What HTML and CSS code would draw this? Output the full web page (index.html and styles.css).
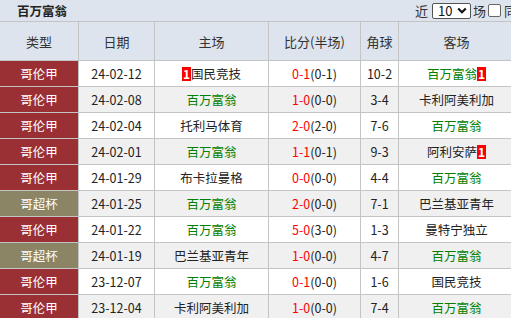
FILE: index.html
```html
<!DOCTYPE html>
<html lang="zh">
<head>
<meta charset="utf-8">
<link rel="stylesheet" href="styles.css">
</head>
<body>
<div class="bar">
  <span class="title">百万富翁</span>
  <div class="tools">
    <span class="t-near">近</span>
    <span class="sel">10<svg width="10" height="7" viewBox="0 0 10 7"><path d="M1.2 1.5 L5 5.2 L8.8 1.5" fill="none" stroke="#111" stroke-width="2.2"/></svg></span>
    <span class="t-field">场</span>
    <span class="chk"></span>
    <span>同</span>
  </div>
</div>
<table class="tbl">
  <colgroup>
    <col class="c1"><col class="c2"><col class="c3"><col class="c4"><col class="c5"><col class="c6">
  </colgroup>
  <thead>
    <tr><th>类型</th><th>日期</th><th>主场</th><th>比分(半场)</th><th>角球</th><th>客场</th></tr>
  </thead>
  <tbody>
    <tr><td class="lg">哥伦甲</td><td>24-02-12</td><td><span class="badge">1</span>国民竞技</td><td><span class="ft">0-1</span>(0-1)</td><td>10-2</td><td class="g">百万富翁<span class="badge">1</span></td></tr>
    <tr class="alt"><td class="lg">哥伦甲</td><td>24-02-08</td><td class="g">百万富翁</td><td><span class="ft">1-0</span>(0-0)</td><td>3-4</td><td>卡利阿美利加</td></tr>
    <tr><td class="lg">哥伦甲</td><td>24-02-04</td><td>托利马体育</td><td><span class="ft">2-0</span>(2-0)</td><td>7-6</td><td class="g">百万富翁</td></tr>
    <tr class="alt"><td class="lg">哥伦甲</td><td>24-02-01</td><td class="g">百万富翁</td><td><span class="ft">1-1</span>(0-1)</td><td>9-3</td><td>阿利安萨<span class="badge">1</span></td></tr>
    <tr><td class="lg">哥伦甲</td><td>24-01-29</td><td>布卡拉曼格</td><td><span class="ft">0-0</span>(0-0)</td><td>4-4</td><td class="g">百万富翁</td></tr>
    <tr class="alt"><td class="cup">哥超杯</td><td>24-01-25</td><td class="g">百万富翁</td><td><span class="ft">2-0</span>(0-0)</td><td>7-1</td><td>巴兰基亚青年</td></tr>
    <tr><td class="lg">哥伦甲</td><td>24-01-22</td><td class="g">百万富翁</td><td><span class="ft">5-0</span>(3-0)</td><td>1-3</td><td>曼特宁独立</td></tr>
    <tr class="alt"><td class="cup">哥超杯</td><td>24-01-19</td><td>巴兰基亚青年</td><td><span class="ft">1-0</span>(0-0)</td><td>4-7</td><td class="g">百万富翁</td></tr>
    <tr><td class="lg">哥伦甲</td><td>23-12-07</td><td class="g">百万富翁</td><td><span class="ft">0-1</span>(0-0)</td><td>1-6</td><td>国民竞技</td></tr>
    <tr class="alt"><td class="lg">哥伦甲</td><td>23-12-04</td><td>卡利阿美利加</td><td><span class="ft">1-0</span>(0-0)</td><td>7-4</td><td class="g">百万富翁</td></tr>
  </tbody>
</table>
</body>
</html>
```

FILE: styles.css
```css
html, body {
  margin: 0;
  padding: 0;
  background: #dde4ed;
  overflow: hidden;
}
body {
  width: 511px;
  font-family: "Noto Sans CJK SC", "Noto Sans", sans-serif;
  font-size: 12px;
  color: #222;
}
.bar {
  height: 21px;
  display: flex;
  align-items: center;
  justify-content: space-between;
  background: #dde4ed;
  overflow: hidden;
}
.title {
  font-weight: bold;
  font-size: 12.5px;
  margin-left: 17px;
  color: #222;
}
.tools {
  display: flex;
  align-items: center;
  gap: 0;
  margin-right: -6px;
  font-size: 13px;
  color: #333;
  flex-shrink: 0;
}
.tools > * { flex-shrink: 0; }
.t-near { margin-right: 4px; }
.t-field { margin-left: 2px; margin-right: 2px; }
.chk { margin-right: 3px; }
.sel {
  display: inline-flex;
  align-items: center;
  justify-content: space-between;
  box-sizing: border-box;
  height: 16px;
  width: 39px;
  padding: 0 3px 0 5px;
  border: 1px solid #555;
  background: #fff;
  font-size: 13px;
  line-height: 14px;
  color: #111;
  border-radius: 2px;
}
.chk {
  display: inline-block;
  box-sizing: border-box;
  width: 13px;
  height: 13px;
  border: 1px solid #666;
  border-radius: 2px;
  background: #fff;
}
.tbl {
  border-collapse: collapse;
  table-layout: fixed;
  width: 515px;
  margin-left: -1px;
}
.c1 { width: 79px; }
.c2 { width: 76px; }
.c3 { width: 114px; }
.c4 { width: 92px; }
.c5 { width: 38px; }
.c6 { width: 116px; }
.tbl th, .tbl td {
  border: 1px solid #c4c4c4;
  padding: 0;
  text-align: center;
  white-space: nowrap;
  overflow: hidden;
}
.tbl thead tr {
  height: 39px;
}
.tbl th {
  font-weight: normal;
  font-size: 13px;
  color: #333;
  background: #dde4ed;
}
.tbl tbody tr {
  height: 26px;
}
.tbl td {
  font-size: 12.5px;
  line-height: 16px;
  color: #222;
  background: #fff;
}
.tbl tr.alt td {
  background: #f0f0f0;
}
.tbl td.lg {
  background: #9b3034;
  color: #fff;
}
.tbl td.cup {
  background: #8b8566;
  color: #fff;
}
.tbl tr.alt td.lg { background: #9b3034; }
.tbl tr.alt td.cup { background: #8b8566; }
.g { color: #008000 !important; }
.ft { color: #ff0000; }
.badge {
  display: inline-block;
  background: #ff0000;
  color: #fff;
  font-weight: bold;
  font-size: 12px;
  line-height: 14px;
  padding: 0 1px;
  vertical-align: 0;
}
```
